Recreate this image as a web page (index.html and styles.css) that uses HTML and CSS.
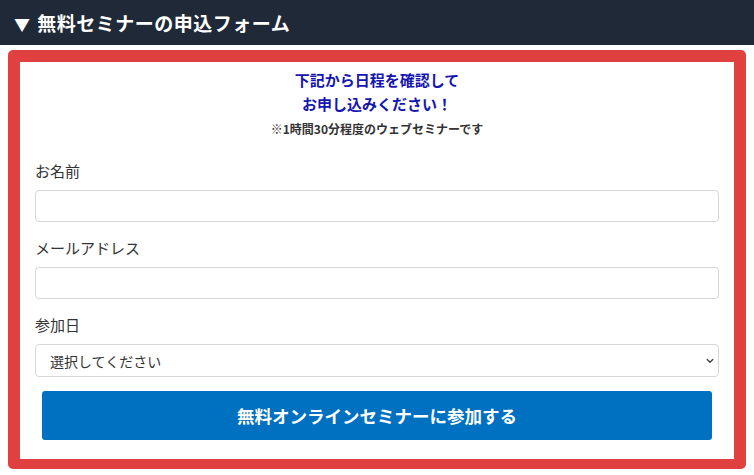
FILE: index.html
```html
<!DOCTYPE html>
<html lang="ja">
<head>
<meta charset="utf-8">
<link rel="stylesheet" href="styles.css">
</head>
<body>
<div class="header"><span class="tri">▼</span> 無料セミナーの申込フォーム</div>
<div class="box">
  <div class="inner">
    <p class="lead">下記から日程を確認して<br>お申し込みください！</p>
    <p class="note">※1時間30分程度のウェブセミナーです</p>
    <label class="label">お名前</label>
    <input class="field" type="text">
    <label class="label">メールアドレス</label>
    <input class="field" type="text">
    <label class="label">参加日</label>
    <div class="select-wrap">
      <select class="select"><option>選択してください</option></select>
      <svg class="chev" width="8" height="6" viewBox="0 0 8 6"><path d="M1.2 1.5 L4 4.2 L6.8 1.5" fill="none" stroke="#444" stroke-width="1.4" stroke-linecap="round" stroke-linejoin="round"/></svg>
    </div>
    <button class="submit">無料オンラインセミナーに参加する</button>
  </div>
</div>
</body>
</html>
```
FILE: styles.css
```css
* { box-sizing: border-box; }
html, body { margin: 0; padding: 0; background: #fff; }
body {
  font-family: "Noto Sans CJK JP", "Noto Sans", sans-serif;
  color: #333;
  width: 754px;
  height: 475px;
  overflow: hidden;
}
.header {
  height: 45px;
  background: #1f2937;
  color: #fff;
  font-weight: 700;
  font-size: 19px;
  line-height: 45px;
  padding-left: 14px;
  letter-spacing: 0.5px;
}
.tri { font-size: 16px; margin-right: 2px; }
.box {
  margin: 5px 8px 0 8px;
  border: 12px solid #e04040;
  border-bottom-width: 10px;
  border-radius: 5px;
  background: #fff;
}
.inner {
  padding: 6px 15px 19px 15px;
  display: flex;
  flex-direction: column;
}
.lead {
  margin: 0;
  text-align: center;
  color: #1515b0;
  font-weight: 700;
  font-size: 15px;
  line-height: 24px;
}
.note {
  margin: 4px 0 0 0;
  text-align: center;
  font-weight: 700;
  font-size: 12px;
  line-height: 18px;
  color: #333;
}
.label {
  display: block;
  font-size: 15px;
  line-height: 22px;
  margin-top: 22px;
  color: #333;
}
.label ~ .label { margin-top: 15px; }
.field {
  display: block;
  margin-top: 8px;
  width: 100%;
  height: 32px;
  border: 1px solid #d6d6d6;
  border-radius: 4px;
  background: #fff;
  outline: none;
}
.select-wrap {
  position: relative;
  margin-top: 8px;
}
.select {
  -webkit-appearance: none;
  appearance: none;
  display: block;
  width: 100%;
  height: 33px;
  border: 1px solid #d6d6d6;
  border-radius: 4px;
  background: #fff;
  font-family: "Noto Sans CJK JP", sans-serif;
  font-size: 14px;
  color: #333;
  padding: 0 14px;
  outline: none;
}
.chev {
  position: absolute;
  right: 5px;
  top: 14px;
  pointer-events: none;
}
.submit {
  margin: 14px 7px 0 7px;
  height: 49px;
  border: none;
  border-radius: 3px;
  background: #0071c1;
  color: #fff;
  font-family: "Noto Sans CJK JP", sans-serif;
  font-weight: 700;
  font-size: 17.5px;
  cursor: pointer;
}
```
